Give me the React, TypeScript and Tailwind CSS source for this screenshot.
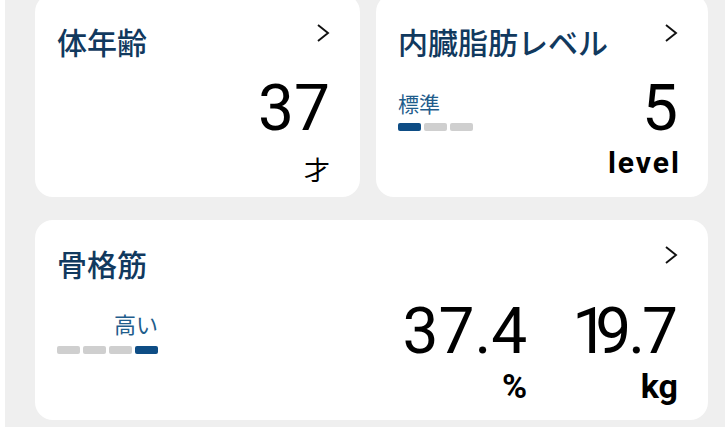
import React from 'react';

const jp = "font-['Noto_Sans_CJK_JP',sans-serif]";
const num = "font-['Roboto',sans-serif]";

const Chevron = () => (
    <svg width="14" height="20" viewBox="0 0 14 20" className="shrink-0">
        <polyline points="2,2 12,10 2,18" fill="none" stroke="#111" strokeWidth="1.9" />
    </svg>
);

const Bars = ({ total, active }: { total: number; active: number }) => (
    <div className="flex gap-[3px]">
        {Array.from({ length: total }).map((_, i) => (
            <div
                key={i}
                className={`w-[23px] h-[8px] rounded-[2px] ${i === active ? 'bg-[#0e4d85]' : 'bg-[#cfcfcf]'}`}
            />
        ))}
    </div>
);

const Header = ({ title }: { title: string }) => (
    <div className="flex items-start justify-between">
        <h2 className={`${jp} mt-[3px] text-[30px] leading-none font-medium text-[#11395e]`}>{title}</h2>
        <Chevron />
    </div>
);

const App: React.FC = () => {
    return (
        <div className="w-[725px] h-[432px] bg-white overflow-hidden">
            <div className="ml-[5px] h-[427px] bg-[#efefef] pl-[30px] pr-[17px] flex flex-col gap-[23px]">
                {/* top row */}
                <div className="grid grid-cols-[325px_332px] gap-x-[16px] -mt-[6px]">
                    {/* 体年齢 */}
                    <div className="h-[203px] bg-white rounded-[18px] pl-[22px] pr-[30px] pt-[29px]">
                        <Header title="体年齢" />
                        <div className="mt-[21px] flex flex-col items-end">
                            <span className={`${num} text-[64px] leading-none text-black`}>37</span>
                            <span className={`${jp} mt-[15px] text-[26px] leading-none text-black`}>才</span>
                        </div>
                    </div>

                    {/* 内臓脂肪レベル */}
                    <div className="h-[203px] bg-white rounded-[18px] pl-[22px] pr-[30px] pt-[29px]">
                        <Header title="内臓脂肪レベル" />
                        <div className="mt-[21px] flex items-start justify-between">
                            <div className="mt-[16px] flex flex-col items-start">
                                <span className={`${jp} text-[21px] leading-none text-[#1f5d8c]`}>標準</span>
                                <div className="mt-[9px]">
                                    <Bars total={3} active={0} />
                                </div>
                            </div>
                            <div className="flex flex-col items-end">
                                <span className={`${num} text-[64px] leading-none text-black`}>5</span>
                                <span className={`${num} mt-[7px] -mr-[3px] text-[30px] leading-none font-bold tracking-[2px] text-black`}>level</span>
                            </div>
                        </div>
                    </div>
                </div>

                {/* 骨格筋 */}
                <div className="h-[200px] bg-white rounded-[18px] pl-[22px] pr-[30px] pt-[25px]">
                    <Header title="骨格筋" />
                    <div className="mt-[22px] flex items-start justify-between">
                        <div className="mt-[12px] flex flex-col items-end">
                            <span className={`${jp} text-[22px] leading-none text-[#1f5d8c]`}>高い</span>
                            <div className="mt-[12px]">
                                <Bars total={4} active={3} />
                            </div>
                        </div>
                        <div className="flex gap-[45px]">
                            <div className="flex flex-col items-end">
                                <span className={`${num} text-[64px] leading-none text-black`}>37.4</span>
                                <span className={`${num} mt-[5px] text-[34px] leading-none font-bold text-black`}>%</span>
                            </div>
                            <div className="flex flex-col items-end">
                                <span className={`${num} text-[64px] leading-none text-black`}>
                                    <span className="tracking-[-13px]">1</span>
                                    <span className="tracking-[-3px]">9.</span>7
                                </span>
                                <span className={`${num} mt-[5px] text-[34px] leading-none font-bold text-black`}>kg</span>
                            </div>
                        </div>
                    </div>
                </div>
            </div>
        </div>
    );
};

export default App;
